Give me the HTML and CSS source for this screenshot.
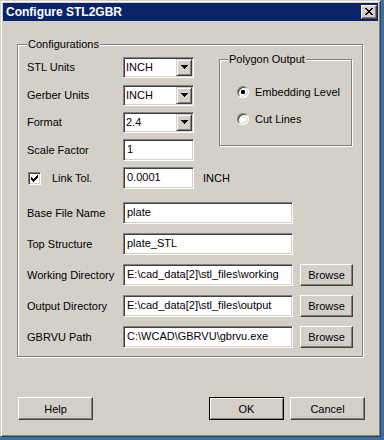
FILE: index.html
```html
<!DOCTYPE html>
<html>
<head>
<meta charset="utf-8">
<title>Configure STL2GBR</title>
<link rel="stylesheet" href="styles.css">
</head>
<body>
<div class="window">
  <div class="titlebar">
    <span class="title">Configure STL2GBR</span>
    <span class="close"><svg width="8" height="7" viewBox="0 0 8 7" shape-rendering="crispEdges"><path d="M0 0h2v1h-2z M6 0h2v1h-2z M1 1h2v1h-2z M5 1h2v1h-2z M2 2h4v1h-4z M3 3h2v1h-2z M2 4h4v1h-4z M1 5h2v1h-2z M5 5h2v1h-2z M0 6h2v1h-2z M6 6h2v1h-2z" fill="#000"/></svg></span>
  </div>
  <div class="content">
    <div class="group main">
      <span class="legend">Configurations</span>
      <div class="upper">
        <div class="fields">
          <div class="row combo-row"><span class="lbl">STL Units</span><div class="combo"><span class="val">INCH</span><span class="drop"><svg width="7" height="4" viewBox="0 0 7 4" shape-rendering="crispEdges"><path d="M0 0h7v1h-1v1h-1v1h-1v1h-1v-1h-1v-1h-1v-1h-1z" fill="#000"/></svg></span></div></div>
          <div class="row combo-row extra"><span class="lbl">Gerber Units</span><div class="combo"><span class="val">INCH</span><span class="drop"><svg width="7" height="4" viewBox="0 0 7 4" shape-rendering="crispEdges"><path d="M0 0h7v1h-1v1h-1v1h-1v1h-1v-1h-1v-1h-1v-1h-1z" fill="#000"/></svg></span></div></div>
          <div class="row combo-row"><span class="lbl">Format</span><div class="combo"><span class="val">2.4</span><span class="drop"><svg width="7" height="4" viewBox="0 0 7 4" shape-rendering="crispEdges"><path d="M0 0h7v1h-1v1h-1v1h-1v1h-1v-1h-1v-1h-1v-1h-1z" fill="#000"/></svg></span></div></div>
          <div class="row"><span class="lbl">Scale Factor</span><div class="edit short">1</div></div>
          <div class="row"><span class="lbl check-lbl"><span class="checkbox"><svg width="7" height="7" viewBox="0 0 7 7" shape-rendering="crispEdges"><path d="M0 2H1V3H2V4H3V3H4V2H5V1H6V0H7V3H6V4H5V5H4V6H3V7H2V6H1V5H0Z" fill="#000"/></svg></span><span class="ctext">Link Tol.</span></span><div class="edit short">0.0001</div><span class="unit">INCH</span></div>
        </div>
        <div class="group poly">
          <span class="legend">Polygon Output</span>
          <div class="opt"><span class="radio on"></span><span>Embedding Level</span></div>
          <div class="opt second"><span class="radio"></span><span>Cut Lines</span></div>
        </div>
      </div>
      <div class="lower">
        <div class="row tall"><span class="lbl">Base File Name</span><div class="edit wide">plate</div></div>
        <div class="row tall"><span class="lbl">Top Structure</span><div class="edit wide">plate_STL</div></div>
        <div class="row tall"><span class="lbl">Working Directory</span><div class="edit wide">E:\cad_data[2]\stl_files\working</div><button class="btn browse">Browse</button></div>
        <div class="row tall"><span class="lbl">Output Directory</span><div class="edit wide">E:\cad_data[2]\stl_files\output</div><button class="btn browse">Browse</button></div>
        <div class="row tall"><span class="lbl">GBRVU Path</span><div class="edit wide">C:\WCAD\GBRVU\gbrvu.exe</div><button class="btn browse">Browse</button></div>
      </div>
    </div>
    <div class="buttons">
      <button class="btn big">Help</button>
      <button class="btn big default">OK</button>
      <button class="btn big cancel">Cancel</button>
    </div>
  </div>
</div>
</body>
</html>
```

FILE: styles.css
```css
* { box-sizing: border-box; }
html, body { margin: 0; padding: 0; }
body {
  background: #3a6ea5;
  width: 384px;
  height: 440px;
  overflow: hidden;
  font-family: "Liberation Sans", Arial, sans-serif;
  font-size: 11px;
  color: #000;
}
.window {
  width: 381px;
  height: 437px;
  background: #d4d0c8;
  border: 1px solid;
  border-color: #d4d0c8 #404040 #404040 #d4d0c8;
  box-shadow: inset 1px 1px 0 #fff, inset -1px -1px 0 #808080;
  padding: 2px;
}
.titlebar {
  height: 18px;
  background: #0a246a;
  display: flex;
  align-items: center;
  padding-left: 3px;
}
.title {
  color: #fff;
  font-weight: bold;
  font-size: 12px;
  line-height: 14px;
}
.close {
  margin-left: auto;
  margin-right: 1px;
  width: 16px;
  height: 14px;
  background: #d4d0c8;
  border: 1px solid;
  border-color: #fff #404040 #404040 #fff;
  box-shadow: inset -1px -1px 0 #808080;
  display: flex;
  padding: 2px 0 0 3px;
}
.close svg { display: block; }
.content {
  padding: 23px 0 0 14px;
}
.group {
  border: 1px solid #808080;
  box-shadow: inset 1px 1px 0 #fff, 1px 1px 0 #fff;
  position: relative;
}
.legend {
  position: absolute;
  top: -7px;
  left: 9px;
  background: #d4d0c8;
  padding: 0 1px;
  line-height: 13px;
}
.main {
  width: 346px;
  height: 313px;
  padding: 12px 0 0 9px;
}
.upper {
  display: flex;
}
.fields {
  width: 192px;
  display: flex;
  flex-direction: column;
  gap: 6px;
}
.row {
  display: flex;
  align-items: center;
  height: 22px;
}
.row.combo-row { height: 21px; }
.row.extra { margin-top: 1px; }
.lbl {
  width: 96px;
  flex: none;
  white-space: nowrap;
  line-height: 13px;
}
.check-lbl {
  display: flex;
  align-items: center;
}
.checkbox {
  width: 13px;
  height: 13px;
  margin-left: 1px;
  background: #fff;
  border: 1px solid;
  border-color: #808080 #fff #fff #808080;
  box-shadow: inset 1px 1px 0 #404040, inset -1px -1px 0 #d4d0c8;
  padding: 2px;
  flex: none;
}
.checkbox svg { display: block; }
.ctext { margin-left: 11px; }
.edit {
  height: 22px;
  background: #fff;
  border: 1px solid;
  border-color: #808080 #fff #fff #808080;
  box-shadow: inset 1px 1px 0 #404040, inset -1px -1px 0 #d4d0c8;
  padding-left: 3px;
  line-height: 19px;
  white-space: nowrap;
  overflow: hidden;
  flex: none;
}
.edit.short { width: 71px; }
.edit.wide { width: 170px; }
.unit { margin-left: 9px; line-height: 13px; }
.combo {
  width: 71px;
  height: 21px;
  background: #fff;
  border: 1px solid;
  border-color: #808080 #fff #fff #808080;
  box-shadow: inset 1px 1px 0 #404040, inset -1px -1px 0 #d4d0c8;
  padding: 1px;
  display: flex;
  flex: none;
}
.combo .val {
  flex: 1;
  padding-left: 1px;
  line-height: 17px;
}
.drop {
  width: 16px;
  height: 17px;
  background: #d4d0c8;
  border: 1px solid;
  border-color: #d4d0c8 #404040 #404040 #d4d0c8;
  box-shadow: inset 1px 1px 0 #fff, inset -1px -1px 0 #808080;
  display: flex;
  align-items: center;
  justify-content: center;
  padding-bottom: 1px;
}
.drop svg { display: block; }
.poly {
  width: 133px;
  height: 87px;
  margin-top: 2px;
  padding: 26px 0 0 17px;
}
.poly .legend { left: 8px; }
.opt {
  display: flex;
  align-items: center;
  height: 12px;
  line-height: 12px;
  white-space: nowrap;
}
.opt.second { margin-top: 15px; }
.radio {
  width: 12px;
  height: 12px;
  border-radius: 50%;
  background: #fff;
  border: 1px solid;
  border-color: #808080 #fff #fff #808080;
  box-shadow: inset 1px 1px 0 #404040, inset -1px -1px 0 #d4d0c8;
  margin-right: 6px;
  display: flex;
  align-items: center;
  justify-content: center;
  flex: none;
}
.radio.on::after {
  content: "";
  width: 4px;
  height: 4px;
  background: #000;
  border-radius: 1px;
}
.lower {
  margin-top: 13px;
  display: flex;
  flex-direction: column;
  gap: 9px;
}
.btn {
  background: #d4d0c8;
  border: 1px solid;
  border-color: #fff #404040 #404040 #fff;
  box-shadow: inset -1px -1px 0 #808080;
  font-family: "Liberation Sans", Arial, sans-serif;
  font-size: 11px;
  color: #000;
  padding: 0;
  margin: 0;
  flex: none;
}
.browse {
  width: 53px;
  height: 22px;
  margin-left: 7px;
}
.buttons {
  width: 348px;
  margin-top: 40px;
  padding-left: 1px;
  display: flex;
}
.big {
  width: 75px;
  height: 23px;
}
.default {
  margin-left: auto;
  border-color: #000;
  box-shadow: inset 1px 1px 0 #fff, inset -1px -1px 0 #808080;
}
.cancel { margin-left: 6px; }
```
